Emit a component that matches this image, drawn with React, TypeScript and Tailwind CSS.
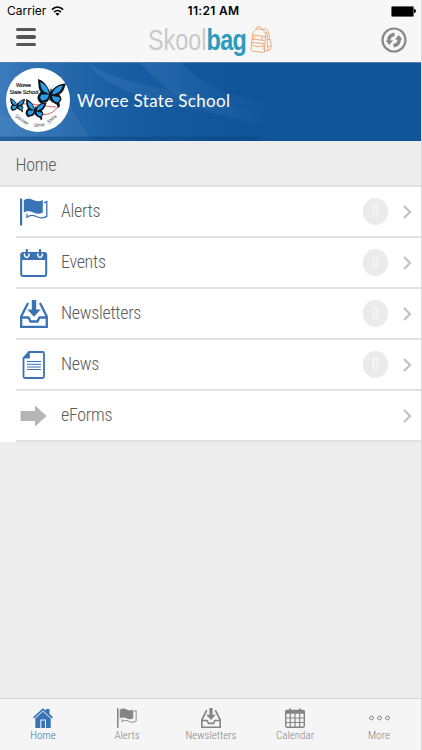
import type { ReactNode } from "react"

const condensed = "font-['Roboto_Condensed','Roboto',sans-serif] font-light [font-stretch:75%]"

function FlagIcon({ className }: { className?: string }) {
    return (
        <svg viewBox="0 0 28 28" className={className} fill="currentColor">
            <path d="M0 0.5h2.200v27H0z" />
            <path d="M3.800 2.300C8-.2 11 1 14 2.300c3 1.200 5.500 1.300 8.800-.3v12.500c-3.500 1.700-5.800 1.500-8.800.3-3-1.300-6-2.400-10.200-.3z" />
            <path d="M24 4.800l2.800-1.200v14.800c-4 2.200-7.200 1.800-10.500.1-3-1.500-6-2-9.300.7v-3.500" fill="none" stroke="currentColor" strokeWidth="1.300" />
        </svg>
    )
}

function EventsIcon() {
    return (
        <svg viewBox="0 0 28 28" className="h-7 w-7" fill="none">
            <rect x="1.200" y="4" width="25" height="23" rx="2" stroke="currentColor" strokeWidth="2" />
            <path d="M1 4h25.500v7H1z" fill="currentColor" />
            <path d="M4.500 4.500c-.5 5.200 5 5.200 4.500 0M17.800 4.500c-.5 5.200 5 5.200 4.500 0" stroke="#fff" strokeWidth="1.500" />
            <path d="M6.800 1v5M20 1v5" stroke="currentColor" strokeWidth="2.200" strokeLinecap="round" />
        </svg>
    )
}

function InboxIcon({ className }: { className?: string }) {
    return (
        <svg viewBox="0 0 28 28" className={className} fill="none" stroke="currentColor" strokeWidth="2.300">
            <path d="M8 3L1.200 16.500V27h25.600V16.500L20 3" />
            <path d="M1 17.500h7.500l2 4h7l2-4H27" />
            <path d="M11.800 0h4.400v9.500h4.500L14 16.800 7.300 9.500h4.500z" fill="currentColor" stroke="none" />
        </svg>
    )
}

function NewsIcon() {
    return (
        <svg viewBox="0 0 28 28" className="h-7 w-7" fill="none" stroke="currentColor">
            <path d="M9 1h13.500a1.500 1.500 0 011.500 1.500v23a1.500 1.500 0 01-1.500 1.500h-17.500A1.500 1.500 0 013.500 25.500V7z" strokeWidth="1.800" />
            <path d="M9.800 1v6.500H3z" fill="currentColor" stroke="none" />
            <path d="M7 10.500h14M7 13.300h14M7 16h14M7 18.500h14" strokeWidth="1" />
        </svg>
    )
}

function ArrowIcon() {
    return (
        <svg viewBox="0 0 28 28" className="h-7 w-7" fill="#b5b5b5">
            <path d="M.5 9H15V3.500L26.500 14 15 24.500V19H.5z" />
        </svg>
    )
}

function HomeIcon() {
    return (
        <svg viewBox="0 0 20 20" className="h-5 w-5" fill="currentColor">
            <path d="M10 .3l3 2.500V1h3.500v4.700l3.500 3.500-1.200 1.200L10 2.500l-8.800 7.900L0 9.200z" />
            <path d="M10 3.500l7.700 7V20H13v-8.500H7.300V20H2.300v-9.500z" />
            <path d="M8.300 12.500H12V20H8.300z" />
        </svg>
    )
}

function CalendarIcon() {
    return (
        <svg viewBox="0 0 20 20" className="h-5 w-5" fill="none" stroke="currentColor">
            <rect x=".7" y="2.500" width="18.600" height="16.800" rx="1.500" strokeWidth="1.400" />
            <path d="M.5 2.500h19v3.300H.5z" fill="currentColor" stroke="none" />
            <path d="M5 .5v3M15 .5v3" strokeWidth="1.800" />
            <path d="M5.300 6v13M10 6v13M14.700 6v13M1 10h18M1 14.500h18" strokeWidth="1.200" />
        </svg>
    )
}

function MoreIcon() {
    return (
        <svg viewBox="0 0 20 20" className="h-5 w-5 overflow-visible" fill="none" stroke="currentColor">
            <circle cx="2.500" cy="10" r="1.900" />
            <circle cx="10.500" cy="10" r="1.900" />
            <circle cx="18.500" cy="10" r="1.900" />
        </svg>
    )
}

function Butterfly({ transform }: { transform: string }) {
    return (
        <g transform={transform}>
            <path d="M14 13C10 5 5 1 0 0c1 6 1 10 4 13-3 3-4 7-1 10l2 2 5-2c2 0 3-2 4-5 1 3 2 5 4 5l4 2 1 3 2-2-1-4c3-2 2-6-1-8 4-2 5-7 6-12-7 1-12 4-15 11z" fill="#0d1218" />
            <path d="M13 14.500C11 8 7 4 2.500 3c1 5 2 8 5 9.500zM12.500 15L5 15.500c-2 3-1 5 1.500 6.500 4-1 6-3 6-7zM16 14.500c1-6 5-9 10-10-1 5-3 8-9 10zM16 16l8 1c1 2 0 4-2 5.500-4-1-5.500-3-6-6.500z" fill="#2a9ce6" />
            <path d="M14.500 9v12" stroke="#0d1218" strokeWidth="1.600" />
            <path d="M13.500 11L12 5M14.500 11l2-6" stroke="#999" strokeWidth=".4" />
        </g>
    )
}

function SchoolBadge() {
    return (
        <svg viewBox="0 0 64 64" className="h-16 w-16 shrink-0">
            <circle cx="32" cy="32" r="32" fill="#fff" />
            <path d="M16 36c13-1 24 3 34 3M22 43c14 7 30 4 31-10" stroke="#dd3434" strokeWidth=".8" fill="none" />
            <g fontFamily="'Liberation Sans', sans-serif" fontSize="5.500" fill="#111" stroke="#111" strokeWidth=".15">
                <text x="10" y="18.500" textLength="15">Woree</text>
                <text x="3.500" y="26" textLength="29">State School</text>
            </g>
            <Butterfly transform="translate(32 11) rotate(5) scale(.97)" />
            <Butterfly transform="translate(4 30) scale(.52)" />
            <Butterfly transform="translate(20 31) rotate(5) scale(.72)" />
            <g fontFamily="'Liberation Sans', sans-serif" fontSize="5" fill="#333">
                <text transform="translate(9 49) rotate(34)" textLength="15" lengthAdjust="spacingAndGlyphs">Discover</text>
                <text transform="translate(28 59) rotate(-5)" textLength="11" lengthAdjust="spacingAndGlyphs">Strive</text>
                <text transform="translate(43 56) rotate(-42)" textLength="11" lengthAdjust="spacingAndGlyphs">Shine</text>
            </g>
        </svg>
    )
}

function BackpackIcon() {
    return (
        <svg viewBox="0 0 23 28" className="h-7 w-[23px]" fill="none" stroke="#eda266" strokeWidth=".9" strokeLinejoin="round">
            <path d="M2.500 9c0-4 3-6 7-6 4 0 6 3 6 7l-1 15c0 1-1 1.500-2 1.500L3 25c-1.500 0-2-1-2-2z" />
            <path d="M6 3c0-3.500 5-3 5 0M2.500 9l12.500 1.500M2 13l12.500 1.500M1.500 16.500l12.500 1V24M1.500 18.500c4 2.500 8 3 12 1M4 10v3M12 11v3" />
            <path d="M12 3.300c5-1 7.500 2 7 7l1 3c1 3 2 8 0 10.500l-6 2M16.500 6c2 5 0 11 1.500 18M17 13l3 1M17.500 21l4-1" />
        </svg>
    )
}

function Header() {
    return (
        <header className="h-[62px] bg-[#f7f7f7]">
            <div className="grid h-[22px] grid-cols-3 items-center pr-[5px] pl-[7px] font-['Inter',sans-serif] text-[12px] text-black">
                <div className="flex items-center">
                    <span className="w-10">Carrier</span>
                    <svg viewBox="0 0 14 11" className="ml-1 h-[10px] w-[13px]" fill="none" stroke="#000" strokeWidth="1.700">
                        <path d="M.8 4C4.500.3 9.500.3 13.200 4M3.200 6.700c2.500-2.300 5.100-2.300 7.600 0" />
                        <path d="M4.800 8.400c1.500-1.200 2.900-1.200 4.400 0L7 10.800z" fill="#000" stroke="none" />
                    </svg>
                </div>
                <span className="pl-1 text-center font-semibold tracking-[0.3px] whitespace-nowrap">11:21 AM</span>
                <div className="flex items-center justify-end">
                    <div className="h-[11px] w-[23px] rounded-[1.5px] border border-[#666] bg-black" />
                    <div className="h-1 w-0.5 rounded-r-sm bg-black" />
                </div>
            </div>
            <div className="flex h-9 items-center justify-between pr-[14px] pb-0.5 pl-[15.5px]">
                <div className="flex w-5 flex-col gap-1 pb-1">
                    <i className="h-[3.5px] rounded-sm bg-[#555]" />
                    <i className="h-[3.5px] rounded-sm bg-[#555]" />
                    <i className="h-[3.5px] rounded-sm bg-[#555]" />
                </div>
                <div className="flex items-center pt-0.5 pl-1">
                    <div className="w-[102px] font-['Liberation_Sans',sans-serif] text-[30px] leading-8">
                        <div className="flex origin-left scale-x-[0.78] whitespace-nowrap">
                            <span className="text-[#c9c9c9]">Skool</span>
                            <span className="font-bold tracking-[-0.8px] text-[#2c9bbd]">bag</span>
                        </div>
                    </div>
                    <BackpackIcon />
                </div>
                <svg viewBox="0 0 26 26" className="mt-0.5 h-[26px] w-[26px]" fill="none" stroke="#898989">
                    <circle cx="13" cy="13" r="11.500" strokeWidth="2.200" />
                    <path d="M8 14.500C7 10.500 9.500 8 13.500 7.200M18 11.500c1 4-1.500 6.500-5.500 7.300" strokeWidth="3.600" />
                    <path d="M4.600 13.500h7.600l-4 4.500zM21.400 12.500h-7.600l4-4.500z" fill="#898989" stroke="none" />
                </svg>
            </div>
        </header>
    )
}

function Banner() {
    return (
        <div className="relative flex h-[79px] items-center gap-[7px] overflow-hidden border-t border-[#4c7eb3] bg-[#0f5499] pb-[5px] pl-[6px]">
            <svg className="absolute inset-0 h-full w-full" viewBox="0 0 421 78" preserveAspectRatio="none">
                <defs>
                    <linearGradient id="shine">
                        <stop offset="0" stopColor="#4f8dcb" stopOpacity=".7" />
                        <stop offset=".35" stopColor="#2a6db2" stopOpacity=".5" />
                        <stop offset="1" stopColor="#0f5499" stopOpacity="0" />
                    </linearGradient>
                    <linearGradient id="ray">
                        <stop offset="0" stopColor="#6ba5dc" stopOpacity=".18" />
                        <stop offset="1" stopColor="#6ba5dc" stopOpacity="0" />
                    </linearGradient>
                </defs>
                <path d="M0 0h280v78H0z" fill="url(#shine)" />
                <path d="M88 0c20 15 55 22 95 29l90 28c-80-5-165-25-185-57z" fill="url(#ray)" />
                <path d="M140 0h42c25 28 62 35 92 43v22c-60-10-100-27-134-65z" fill="url(#ray)" />
                <path d="M0 53c24 0 43 8 88 25H0zM60 17c7 25 20 43 34 61H40z" fill="#7bb1e3" opacity=".1" />
                <path d="M0 73.500h260V78H0z" fill="#084784" opacity=".5" />
            </svg>
            <div className="relative"><SchoolBadge /></div>
            <h1 className="relative pt-0.5 font-['Lato',sans-serif] text-[17px] tracking-[0.35px] whitespace-nowrap text-white">Woree State School</h1>
        </div>
    )
}

function Row({ icon, label, badge = true }: { icon: ReactNode; label: string; badge?: boolean }) {
    return (
        <li className="ml-4 flex h-[51px] items-center border-b-2 border-[#e2e2e2] text-[#3873b5]">
            <div className="flex w-[45px] pl-[3.5px]">{icon}</div>
            <span className={`flex-1 pb-[3px] text-[18px] tracking-[-0.3px] text-[#5c5c5c] ${condensed}`}>{label}</span>
            {badge && (
                <span className={`mr-[15px] flex h-[27px] w-[25px] items-center justify-center rounded-full bg-[#ebebeb] text-[14px] text-white ${condensed}`}>0</span>
            )}
            <svg viewBox="0 0 9 14" className="mr-[9px] h-[14px] w-[9px]" fill="none" stroke="#c2c2c2" strokeWidth="2.200">
                <path d="M1 1l6 6-6 6" />
            </svg>
        </li>
    )
}

function Tab({ icon, label, active = false }: { icon: ReactNode; label: string; active?: boolean }) {
    return (
        <div className={`flex flex-col items-center pt-[9px] ${active ? "text-[#3873b5]" : "text-[#858585]"}`}>
            {icon}
            <span className={`text-[11px] leading-4 ${condensed}`}>{label}</span>
        </div>
    )
}

export default function App() {
    return (
        <div className="flex h-[750px] w-[422px] flex-col overflow-hidden border-r border-[#dadada] bg-[#ededed]">
            <Header />
            <Banner />
            <h2 className={`h-[46px] border-b-2 border-[#e1e1e1] pt-[10px] pl-[15.5px] text-[18px] leading-7 tracking-[-0.3px] text-[#5c5c5c] ${condensed}`}>Home</h2>
            <ul className="bg-white">
                <Row icon={<FlagIcon className="h-7 w-7" />} label="Alerts" />
                <Row icon={<EventsIcon />} label="Events" />
                <Row icon={<InboxIcon className="h-7 w-7" />} label="Newsletters" />
                <Row icon={<NewsIcon />} label="News" />
                <Row icon={<ArrowIcon />} label="eForms" badge={false} />
            </ul>
            <nav className="mt-auto grid h-[52px] grid-cols-5 border-t border-[#d6d6d6] bg-[#f5f5f5] pl-px">
                <Tab icon={<HomeIcon />} label="Home" active />
                <Tab icon={<FlagIcon className="h-5 w-5" />} label="Alerts" />
                <Tab icon={<InboxIcon className="h-5 w-5" />} label="Newsletters" />
                <Tab icon={<CalendarIcon />} label="Calendar" />
                <Tab icon={<MoreIcon />} label="More" />
            </nav>
        </div>
    )
}
